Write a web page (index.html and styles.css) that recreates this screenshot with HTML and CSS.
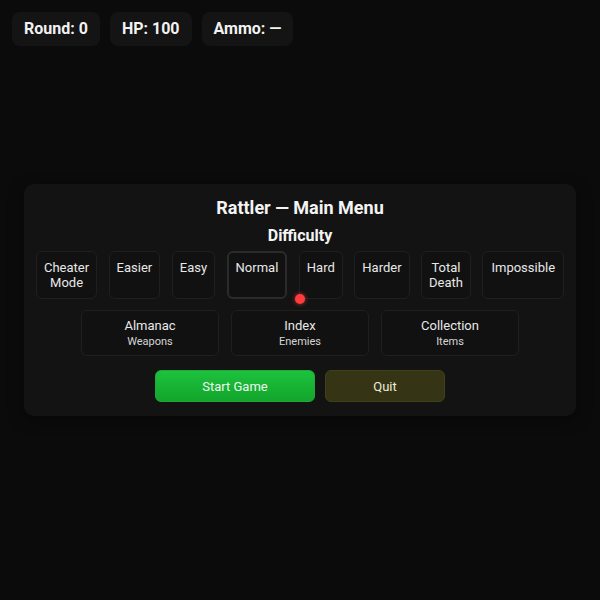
FILE: index.html
```html
<!DOCTYPE html>
<html lang="en">
<head>
    <meta charset="UTF-8">
    <meta name="viewport" content="width=device-width, initial-scale=1.0">
    <title>Rattler</title>
    <link rel="stylesheet" href="styles.css">
</head>
<body>
    <!-- HUD -->
    <div class="hud">
        <div class="hud-pill">Round: 0</div>
        <div class="hud-pill">HP: 100</div>
        <div class="hud-pill">Ammo: —</div>
    </div>

    <!-- Main Menu -->
    <div class="screen">
        <div class="menu">
            <h2>Rattler — Main Menu</h2>
            <h3>Difficulty</h3>
            <div class="diff-row">
                <button class="diff-btn wrap">Cheater Mode</button>
                <button class="diff-btn">Easier</button>
                <button class="diff-btn">Easy</button>
                <button class="diff-btn selected">Normal</button>
                <button class="diff-btn">Hard</button>
                <button class="diff-btn">Harder</button>
                <button class="diff-btn wrap">Total Death</button>
                <button class="diff-btn wide">Impossible</button>
            </div>
            <div class="info-row">
                <button class="info-btn">Almanac<span>Weapons</span></button>
                <button class="info-btn">Index<span>Enemies</span></button>
                <button class="info-btn">Collection<span>Items</span></button>
            </div>
            <div class="action-row">
                <button class="start-btn">Start Game</button>
                <button class="quit-btn">Quit</button>
            </div>
        </div>
    </div>

    <!-- aim cursor -->
    <div class="cursor"></div>
</body>
</html>
```

FILE: styles.css
```css
/* Base */
body {
    margin: 0;
    height: 600px;
    background-color: #0b0b0b;
    color: #e8e8e8;
    font-family: Roboto, "Liberation Sans", sans-serif;
    overflow: hidden;
}

button {
    font-family: inherit;
    color: #e8e8e8;
    cursor: pointer;
}

/* HUD */
.hud {
    display: flex;
    gap: 10px;
    padding: 12px;
}

.hud-pill {
    background-color: #141414;
    border-radius: 8px;
    padding: 8px 12px;
    font-size: 16px;
    line-height: 18px;
    font-weight: 700;
    color: #f2f2f2;
}

/* Menu panel */
.screen {
    position: absolute;
    inset: 0;
    display: flex;
    justify-content: center;
    align-items: center;
    padding: 0 24px;
}

.menu {
    flex: 1;
    min-width: 0;
    background-color: #131313;
    border-radius: 10px;
    padding: 12px 12px 14px;
    text-align: center;
    box-shadow: 0 4px 16px rgba(0, 0, 0, 0.4);
}

.menu h2 {
    margin: 0 0 6px;
    font-size: 18px;
    line-height: 24px;
    font-weight: 700;
    color: #f4f4f4;
}

.menu h3 {
    margin: 0 0 5px;
    font-size: 16px;
    line-height: 20px;
    font-weight: 700;
    color: #f4f4f4;
}

.diff-row {
    display: flex;
    justify-content: center;
    gap: 11.5px;
}

.diff-btn {
    background-color: #111;
    border: 1px solid #1f1f1f;
    border-radius: 6px;
    padding: 8px 7px;
    font-size: 13px;
    line-height: 15px;
    display: flex;
    justify-content: center;
    align-items: flex-start;
}

.diff-btn.wrap {
    width: min-content;
}

.diff-btn.wide {
    padding: 8px 8px;
}

.diff-btn.selected {
    border: 2px solid #2b2b2b;
    padding: 7px 7px;
}

.info-row {
    display: flex;
    justify-content: center;
    gap: 12px;
    margin-top: 11px;
}

.info-btn {
    width: 138px;
    height: 46px;
    background-color: #111;
    border: 1px solid #1f1f1f;
    border-radius: 6px;
    padding: 7px 8px;
    font-size: 13px;
    line-height: 16px;
    display: flex;
    flex-direction: column;
    align-items: center;
}

.info-btn span {
    font-size: 11px;
    line-height: 15px;
    color: #d6d6d6;
}

.action-row {
    display: flex;
    justify-content: center;
    gap: 10px;
    margin-top: 14px;
}

.start-btn {
    width: 160px;
    height: 32px;
    border: 1px solid #1ea83a;
    border-radius: 6px;
    background: linear-gradient(180deg, #1dc23d, #12a52c);
    font-size: 13px;
    color: #eef8ee;
}

.quit-btn {
    width: 120px;
    height: 32px;
    border: 1px solid #414119;
    border-radius: 6px;
    background-color: #353515;
    font-size: 13px;
    color: #ececd8;
}

/* Aim cursor */
.cursor {
    position: absolute;
    left: 295px;
    top: 294px;
    width: 10px;
    height: 10px;
    border-radius: 50%;
    background-color: #ff3b3b;
    box-shadow: 0 0 4px rgba(255, 60, 60, 0.7);
}
```
